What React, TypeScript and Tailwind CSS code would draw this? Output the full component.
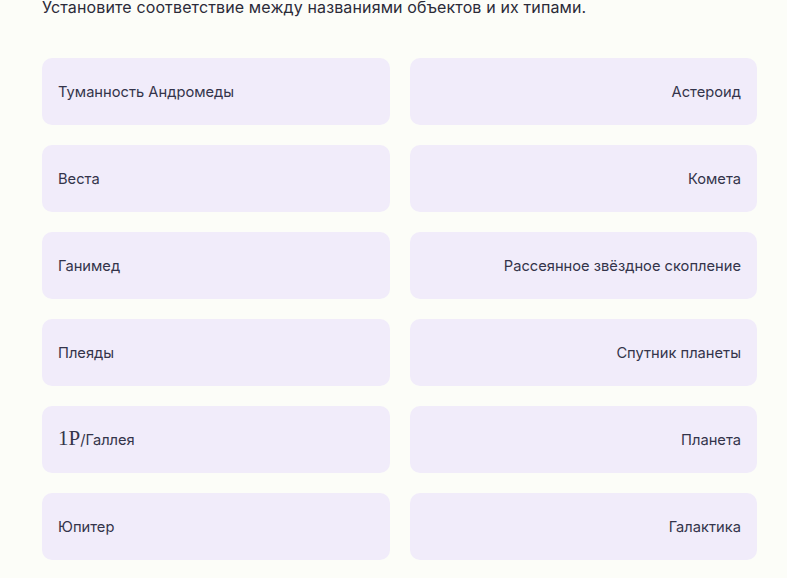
import React from 'react';

const left = ['Туманность Андромеды', 'Веста', 'Ганимед', 'Плеяды', '__comet__', 'Юпитер'];
const right = ['Астероид', 'Комета', 'Рассеянное звёздное скопление', 'Спутник планеты', 'Планета', 'Галактика'];

const Card: React.FC<{ children: React.ReactNode; align: 'left' | 'right' }> = ({ children, align }) => (
  <div
    className={`h-[67px] rounded-[10px] bg-[#f1ecfa] px-4 pt-[1px] flex items-center text-[14.7px] text-[#34344a] ${
      align === 'right' ? 'justify-end' : 'justify-start'
    }`}
  >
    {children}
  </div>
);

export default function App() {
  return (
    <div className="min-h-screen bg-[#fcfdf8] overflow-hidden" style={{ fontFamily: 'Inter, "Noto Sans", sans-serif' }}>
      <div className="pl-[42px] pr-[30px]">
        <p className="text-[16px] leading-5 tracking-[0.13px] text-[#2b2b38] -mt-[3px]">
          Установите соответствие между названиями объектов и их типами.
        </p>
        <div className="mt-[41px] grid grid-cols-2 gap-x-5 gap-y-5 w-[715px]">
          {left.map((l, i) => (
            <React.Fragment key={i}>
              <Card align="left">
                {l === '__comet__' ? (
                  <span className="flex items-baseline">
                    <span className="text-[21px] leading-none" style={{ fontFamily: '"Liberation Serif", serif' }}>1P</span>
                    <span>/Галлея</span>
                  </span>
                ) : (
                  l
                )}
              </Card>
              <Card align="right">{right[i]}</Card>
            </React.Fragment>
          ))}
        </div>
      </div>
    </div>
  );
}
